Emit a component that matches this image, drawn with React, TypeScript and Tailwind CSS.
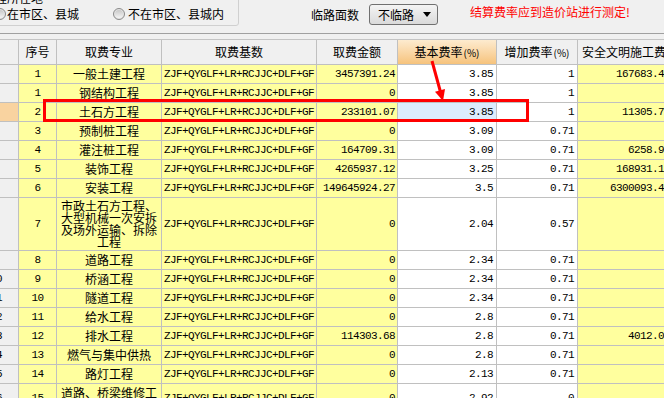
import React from "react";

type Row = {
  idx: number;
  seq: string;
  name: string[];
  amt: string;
  base: string;
  add: string;
  safe: string;
  h: string;
  hl?: boolean;
};

const F = "ZJF+QYGLF+LR+RCJJC+DLF+GF";

const rows: Row[] = [
  { idx: 1, seq: "1", name: ["一般土建工程"], amt: "3457391.24", base: "3.85", add: "1", safe: "167683.41", h: "h-[19px]" },
  { idx: 2, seq: "1", name: ["钢结构工程"], amt: "0", base: "3.85", add: "1", safe: "", h: "h-[19px]" },
  { idx: 3, seq: "2", name: ["土石方工程"], amt: "233101.07", base: "3.85", add: "1", safe: "11305.72", h: "h-[19px]", hl: true },
  { idx: 4, seq: "3", name: ["预制桩工程"], amt: "0", base: "3.09", add: "0.71", safe: "", h: "h-[19px]" },
  { idx: 5, seq: "4", name: ["灌注桩工程"], amt: "164709.31", base: "3.09", add: "0.71", safe: "6258.95", h: "h-[19px]" },
  { idx: 6, seq: "5", name: ["装饰工程"], amt: "4265937.12", base: "3.25", add: "0.71", safe: "168931.18", h: "h-[19px]" },
  { idx: 7, seq: "6", name: ["安装工程"], amt: "149645924.27", base: "3.5", add: "0.71", safe: "6300093.44", h: "h-[19px]" },
  {
    idx: 8,
    seq: "7",
    name: ["市政土石方工程、", "大型机械一次安拆", "及场外运输、拆除", "工程"],
    amt: "0",
    base: "2.04",
    add: "0.57",
    safe: "",
    h: "h-[53px]",
  },
  { idx: 9, seq: "8", name: ["道路工程"], amt: "0", base: "2.34", add: "0.71", safe: "", h: "h-[19px]" },
  { idx: 10, seq: "9", name: ["桥涵工程"], amt: "0", base: "2.34", add: "0.71", safe: "", h: "h-[19px]" },
  { idx: 11, seq: "10", name: ["隧道工程"], amt: "0", base: "2.34", add: "0.71", safe: "", h: "h-[19px]" },
  { idx: 12, seq: "11", name: ["给水工程"], amt: "0", base: "2.8", add: "0.71", safe: "", h: "h-[19px]" },
  { idx: 13, seq: "12", name: ["排水工程"], amt: "114303.68", base: "2.8", add: "0.71", safe: "4012.03", h: "h-[19px]" },
  { idx: 14, seq: "13", name: ["燃气与集中供热"], amt: "0", base: "2.8", add: "0.71", safe: "", h: "h-[19px]" },
  { idx: 15, seq: "14", name: ["路灯工程"], amt: "0", base: "2.13", add: "0.71", safe: "", h: "h-[19px]" },
  { idx: 16, seq: "15", name: ["道路、桥梁维修工", "程"], amt: "0", base: "2.92", add: "0", safe: "", h: "h-[30px]" },
];

const cjk = "font-['Noto_Sans_CJK_SC','Noto_Sans',sans-serif]";
const mono = "font-['Liberation_Mono',monospace] text-[11px] tracking-[-0.6px]";
const cell = "border-r border-b border-[#c0c0c0] flex items-center overflow-hidden shrink-0";

function Radio() {
  return (
    <div className="w-[12px] h-[12px] rounded-full border border-[#8a8a8a] bg-[#e4e4e4] flex items-center justify-center shrink-0">
      <div className="w-[8px] h-[8px] rounded-full bg-gradient-to-b from-[#c8c8c8] to-[#f4f4f4]" />
    </div>
  );
}

export default function App() {
  return (
    <div className={`relative w-[664px] h-[398px] overflow-hidden bg-[#f0f0f0] text-black text-[12px] ${cjk}`}>
      {/* top bar */}
      <div className="h-[33px] flex items-start">
        <div className="ml-[-30px] mt-[-10px] w-[269px] h-[36px] border border-[#d0d0d0] rounded-br-[3px] shrink-0 flex flex-col">
          <div className="ml-[12px] mt-[1px] leading-[12px]">工程所在地</div>
          <div className="mt-[2px] flex items-center h-[16px] leading-[16px]">
            <div className="ml-[23px]">
              <Radio />
            </div>
            <span className="ml-[1px]">在市区、县城</span>
            <div className="ml-[34px]">
              <Radio />
            </div>
            <span className="ml-[3px]">不在市区、县城内</span>
          </div>
        </div>
        <div className="ml-[72px] mt-[7px] leading-[16px] shrink-0">临路面数</div>
        <div className="ml-[10px] mt-[4px] w-[69px] h-[21px] border border-[#707070] rounded-[3px] bg-gradient-to-b from-[#f4f4f4] to-[#dadada] flex items-center shrink-0">
          <span className="ml-[8px] leading-[16px]">不临路</span>
          <span className="ml-auto mr-[6px] w-0 h-0 border-l-[4px] border-r-[4px] border-t-[5px] border-l-transparent border-r-transparent border-t-black" />
        </div>
        <div className="ml-[32px] mt-[4px] leading-[16px] text-[#ff0000] shrink-0">结算费率应到造价站进行测定!</div>
      </div>
      <div className="h-[7px] border-t border-b border-t-[#a0a0a0] border-b-[#c4c4c4]" />

      {/* table */}
      <div className="w-[675px]">
        <div className="flex h-[25px]">
          <div className={`${cell} w-[19px] bg-[#f0f0f0]`} />
          <div className={`${cell} w-[38px] justify-center bg-[#f0f0f0]`}>序号</div>
          <div className={`${cell} w-[105px] justify-center bg-[#f0f0f0]`}>取费专业</div>
          <div className={`${cell} w-[155px] justify-center bg-[#f0f0f0]`}>取费基数</div>
          <div className={`${cell} w-[81px] justify-center bg-[#f0f0f0]`}>取费金额</div>
          <div className={`${cell} w-[99px] justify-center bg-gradient-to-b from-[#fdebcf] to-[#f6c37c]`}>
            基本费率<span className="text-[10px] ml-[1px]">(%)</span>
          </div>
          <div className={`${cell} w-[81px] justify-center bg-[#f0f0f0]`}>
            增加费率<span className="text-[10px] ml-[1px]">(%)</span>
          </div>
          <div className={`${cell} w-[97px] pl-[4px] bg-[#f0f0f0] whitespace-nowrap`}>安全文明施工费</div>
        </div>
        {rows.map((r) => (
          <div key={r.idx} className={`flex ${r.h}`}>
            <div className={`${cell} w-[19px] ${r.hl ? "bg-[#f9d3a0]" : "bg-[#f0f0f0]"}`}>
              <div className={`ml-[-16px] w-[24px] shrink-0 text-center ${mono}`}>{r.idx}</div>
            </div>
            <div className={`${cell} w-[38px] justify-center bg-[#ffff9e] ${mono}`}>{r.seq}</div>
            <div className={`${cell} w-[105px] justify-center bg-[#ffff9e]`}>
              <div className="flex flex-col items-center leading-[12px] whitespace-nowrap">
                {r.name.map((n, i) => (
                  <span key={i}>{n}</span>
                ))}
              </div>
            </div>
            <div className={`${cell} w-[155px] pl-[2px] bg-[#ffff9e] ${mono} whitespace-nowrap`}>{F}</div>
            <div className={`${cell} w-[81px] justify-end pr-[2px] bg-[#ffff9e] ${mono} whitespace-nowrap`}>{r.amt}</div>
            <div className={`${cell} w-[99px] justify-end pr-[3px] ${r.hl ? "bg-[#dcecfc]" : "bg-white"} ${mono}`}>{r.base}</div>
            <div className={`${cell} w-[81px] justify-end pr-[3px] bg-white ${mono}`}>{r.add}</div>
            <div className={`${cell} w-[97px] justify-end pr-[4px] bg-[#ffff9e] ${mono} whitespace-nowrap`}>{r.safe}</div>
          </div>
        ))}
      </div>

      {/* red annotation box */}
      <div className="absolute left-[43px] top-[99px] w-[486px] h-[23px] border-[3px] border-[#ff0000] pointer-events-none" />
      <svg className="absolute left-0 top-0 pointer-events-none" width="664" height="398">
        <line x1="432" y1="61" x2="440.5" y2="92" stroke="#ff0000" strokeWidth="3" />
        <polygon points="443,101 445,89 435,91.7" fill="#ff0000" />
      </svg>
    </div>
  );
}
